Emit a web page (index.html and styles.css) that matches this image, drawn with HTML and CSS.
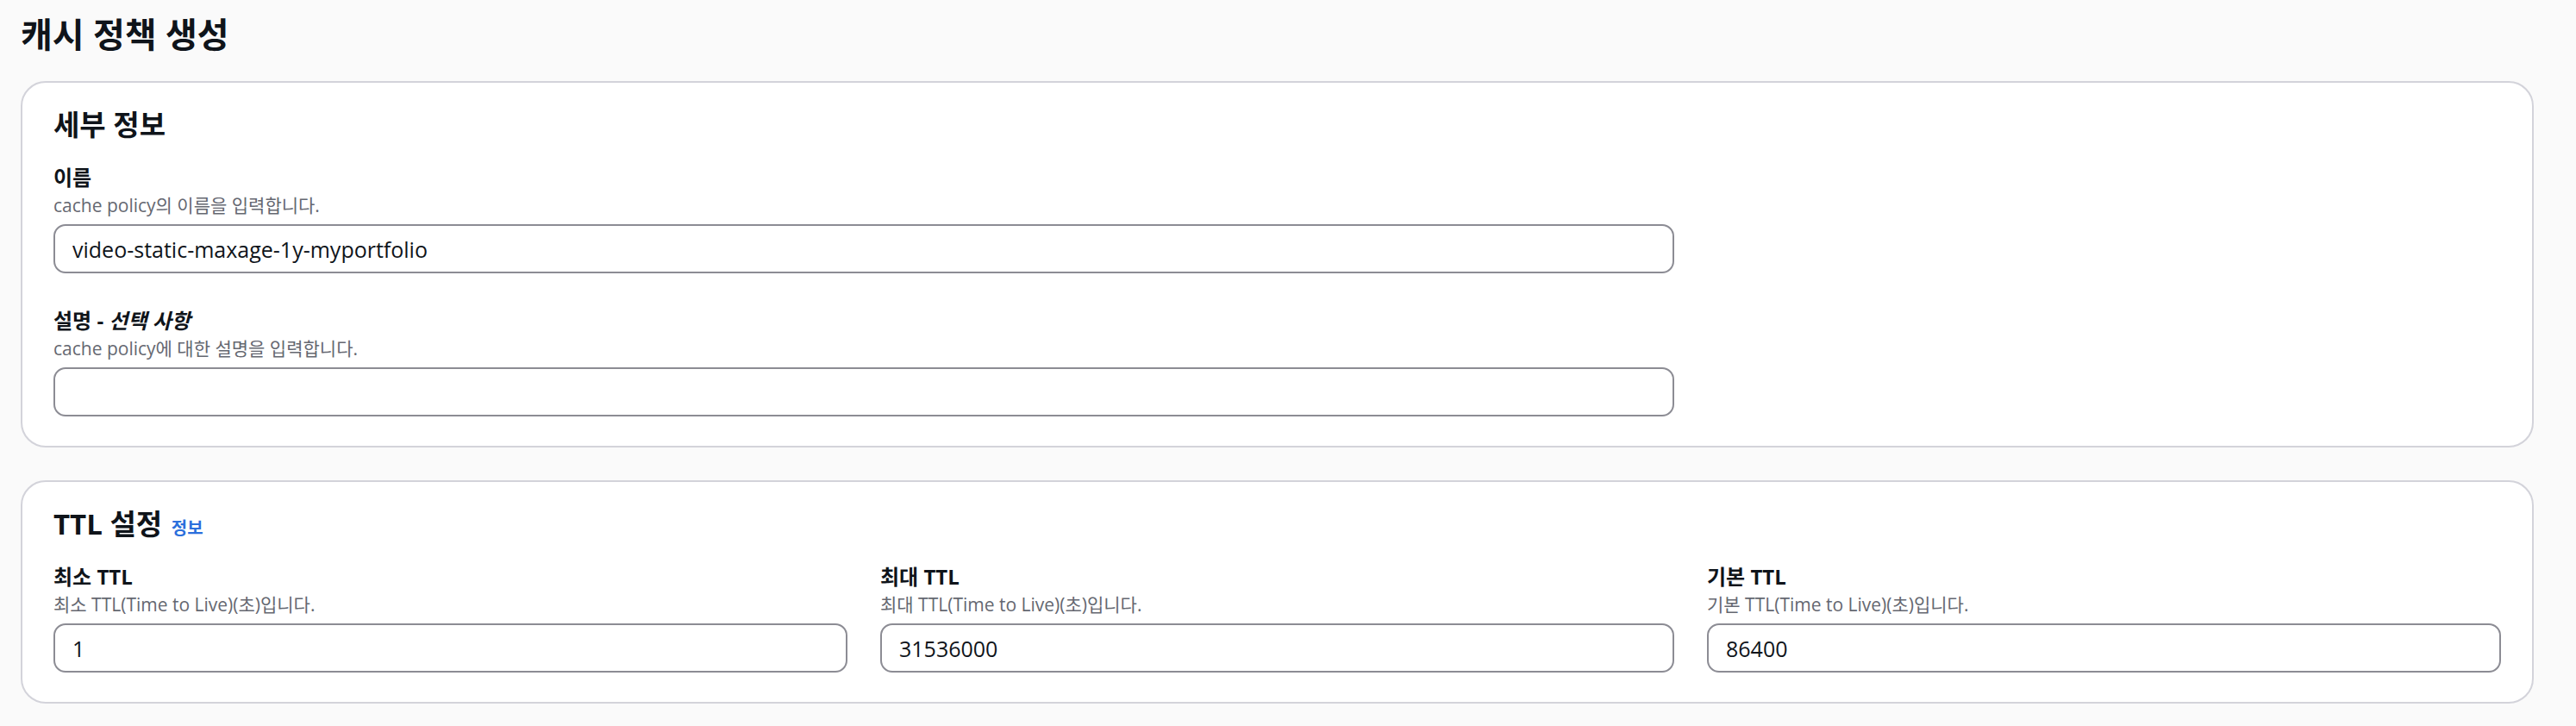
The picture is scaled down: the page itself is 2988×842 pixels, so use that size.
FILE: index.html
```html
<!DOCTYPE html>
<html lang="ko">
<head>
    <meta charset="UTF-8">
    <meta name="viewport" content="width=device-width, initial-scale=1.0">
    <title>캐시 정책 생성</title>
    <link rel="stylesheet" href="styles.css">
</head>
<body>
    <main class="page">
        <h1 class="page-title">캐시 정책 생성</h1>

        <section class="panel">
            <h2 class="panel-title">세부 정보</h2>
            <div class="form-grid">
                <div class="field span-2">
                    <label class="field-label" for="policyName">이름</label>
                    <div class="field-desc">cache policy의 이름을 입력합니다.</div>
                    <input class="text-input" id="policyName" type="text" value="video-static-maxage-1y-myportfolio">
                </div>
                <div class="field span-2">
                    <label class="field-label" for="policyDesc">설명 - <i>선택 사항</i></label>
                    <div class="field-desc">cache policy에 대한 설명을 입력합니다.</div>
                    <input class="text-input" id="policyDesc" type="text" value="">
                </div>
            </div>
        </section>

        <section class="panel">
            <h2 class="panel-title">TTL 설정 <a class="info-link" href="#">정보</a></h2>
            <div class="form-grid">
                <div class="field">
                    <label class="field-label" for="minTtl">최소 TTL</label>
                    <div class="field-desc">최소 TTL(Time to Live)(초)입니다.</div>
                    <input class="text-input" id="minTtl" type="text" value="1">
                </div>
                <div class="field">
                    <label class="field-label" for="maxTtl">최대 TTL</label>
                    <div class="field-desc">최대 TTL(Time to Live)(초)입니다.</div>
                    <input class="text-input" id="maxTtl" type="text" value="31536000">
                </div>
                <div class="field">
                    <label class="field-label" for="defTtl">기본 TTL</label>
                    <div class="field-desc">기본 TTL(Time to Live)(초)입니다.</div>
                    <input class="text-input" id="defTtl" type="text" value="86400">
                </div>
            </div>
        </section>
    </main>
</body>
</html>
```

FILE: styles.css
```css
body {
    margin: 0;
    background: #fafafa;
    color: #0f141a;
    font-family: "Open Sans", "Noto Sans CJK KR", sans-serif;
}
.page {
    padding: 14px 49px 20px 24px;
}
.page-title {
    margin: 0 0 28px;
    font-size: 40px;
    line-height: 52px;
    font-weight: 700;
}
.panel {
    background: white;
    border: 2px solid #d3d3da;
    border-radius: 29px;
    padding: 27px 36px 34px;
    margin-bottom: 38px;
}
.panel-title {
    margin: 0 0 21px;
    font-size: 33px;
    line-height: 44px;
    font-weight: 700;
}
.info-link {
    margin-left: 2px;
    font-size: 20px;
    line-height: 20px;
    font-weight: 700;
    color: #2b6fdc;
    text-decoration: none;
}
.form-grid {
    display: grid;
    grid-template-columns: repeat(3, 1fr);
    column-gap: 38px;
    row-gap: 37px;
}
.span-2 {
    grid-column: span 2;
}
.field {
    display: flex;
    flex-direction: column;
}
.field-label {
    font-size: 24px;
    line-height: 36px;
    font-weight: 700;
}
.field-desc {
    font-size: 21px;
    line-height: 29px;
    color: #656871;
    margin-bottom: 7px;
}
.text-input {
    box-sizing: border-box;
    width: 100%;
    height: 57px;
    padding: 0 20px;
    border: 2px solid #8c8c94;
    border-radius: 14px;
    background: white;
    font-family: "Open Sans", "Noto Sans CJK KR", sans-serif;
    font-size: 25px;
    color: #0f141a;
    outline: none;
}
```
